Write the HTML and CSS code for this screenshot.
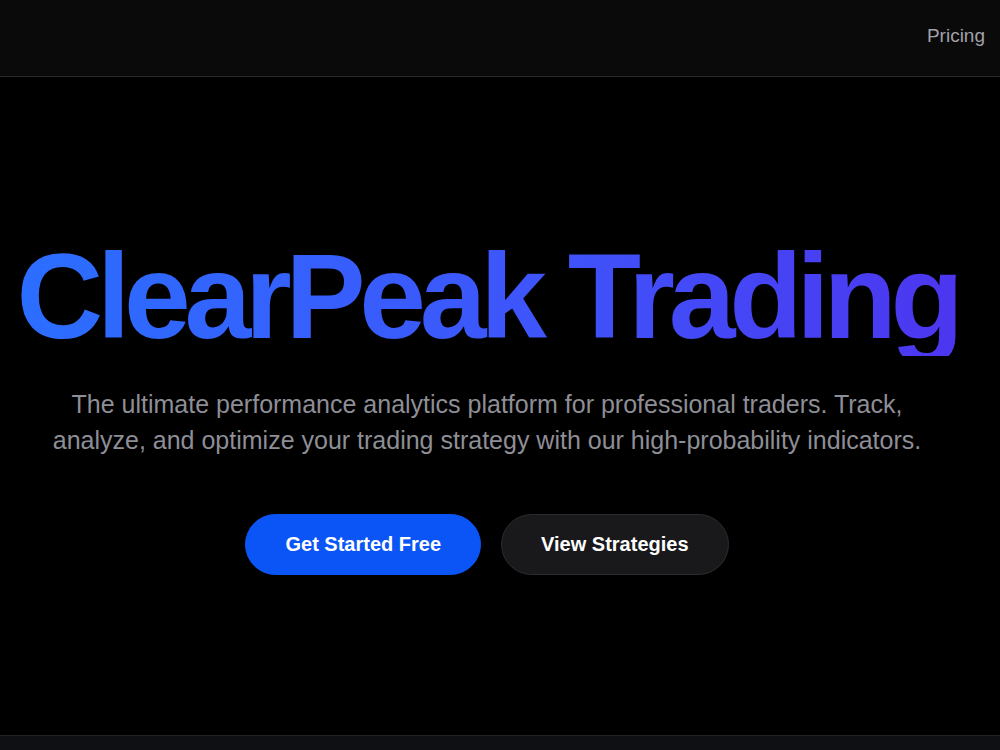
FILE: index.html
```html
<!DOCTYPE html>
<html>

<head>
    <meta name="viewport" content="width=device-width, initial-scale=1">
    <link rel="stylesheet" href="styles.css">
</head>

<body>

<header class="topbar">
    <nav class="nav">
        <a href="#pricing" class="nav-link">Pricing</a>
    </nav>
</header>

<main class="hero">
    <h1 class="hero-title">ClearPeak Trading</h1>

    <p class="hero-text">
        The ultimate performance analytics platform for professional traders. Track,
        analyze, and optimize your trading strategy with our high-probability indicators.
    </p>

    <div class="hero-actions">
        <a href="/signup" class="btn btn-primary">Get Started Free</a>
        <a href="/strategies" class="btn btn-dark">View Strategies</a>
    </div>
</main>

<footer class="bottom"></footer>

</body>
</html>
```

FILE: styles.css
```css
body {
    margin: 0;
    background-color: #000;
    color: #fff;
    font-family: "Liberation Sans", Arial, Helvetica, sans-serif;
}

a {
    text-decoration: none;
}

.topbar {
    height: 77px;
    background-color: #0a0a0a;
    border-bottom: 1px solid #2a2a2c;
    display: flex;
    align-items: center;
    justify-content: flex-end;
    padding: 0 15px 4px;
    box-sizing: border-box;
}

.nav-link {
    color: #a1a1aa;
    font-size: 19px;
}

.hero {
    height: 658px;
    display: flex;
    flex-direction: column;
    align-items: center;
    justify-content: center;
    text-align: center;
    padding: 0 26px 2px 0;
    box-sizing: border-box;
}

.hero-title {
    margin: 0;
    font-size: 120px;
    line-height: 1;
    font-weight: 700;
    letter-spacing: -0.052em;
    background: linear-gradient(90deg, #2b6eff 0%, #3e55fb 55%, #4c36ef 100%);
    -webkit-background-clip: text;
    background-clip: text;
    color: transparent;
}

.hero-text {
    margin: 30px 0 0;
    max-width: 900px;
    font-size: 25px;
    line-height: 36px;
    color: #8e8e96;
}

.hero-actions {
    margin-top: 56px;
    display: flex;
    gap: 20px;
}

.btn {
    display: inline-block;
    padding: 17px 39px;
    border: 1px solid transparent;
    border-radius: 999px;
    font-size: 20px;
    line-height: 25px;
    font-weight: 700;
    color: #fff;
}

.btn-primary {
    background-color: #0b55f6;
    border-color: #0b55f6;
}

.btn-dark {
    background-color: #19191b;
    border-color: #2c2c2f;
}

.bottom {
    height: 14px;
    background-color: #0f1013;
    border-top: 1px solid #222226;
}
```
